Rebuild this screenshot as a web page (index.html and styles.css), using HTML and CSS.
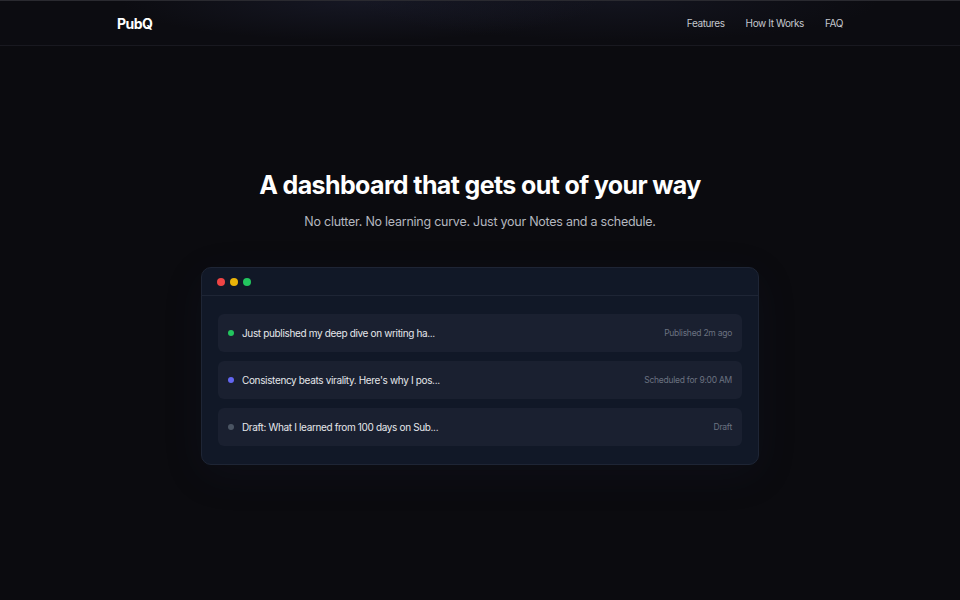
FILE: index.html
```html
<!DOCTYPE html>
<html lang="en">
<head>
    <meta charset="UTF-8">
    <meta name="viewport" content="width=device-width, initial-scale=1.0">
    <title>PubQ - Dashboard</title>
    <link rel="stylesheet" href="styles.css">
</head>
<body>
    <header class="site-header">
        <div class="header-inner">
            <a class="logo" href="#">PubQ</a>
            <nav class="nav">
                <a href="#">Features</a>
                <a href="#">How It Works</a>
                <a href="#">FAQ</a>
            </nav>
        </div>
    </header>

    <main class="hero">
        <h1>A dashboard that gets out of your way</h1>
        <p class="subtitle">No clutter. No learning curve. Just your Notes and a schedule.</p>

        <div class="window">
            <div class="window-bar">
                <span class="light red"></span>
                <span class="light yellow"></span>
                <span class="light green"></span>
            </div>
            <div class="window-body">
                <div class="note-row">
                    <span class="status published"></span>
                    <span class="note-title">Just published my deep dive on writing ha...</span>
                    <span class="note-meta">Published 2m ago</span>
                </div>
                <div class="note-row">
                    <span class="status scheduled"></span>
                    <span class="note-title">Consistency beats virality. Here's why I pos...</span>
                    <span class="note-meta">Scheduled for 9:00 AM</span>
                </div>
                <div class="note-row">
                    <span class="status draft"></span>
                    <span class="note-title">Draft: What I learned from 100 days on Sub...</span>
                    <span class="note-meta">Draft</span>
                </div>
            </div>
        </div>
    </main>
</body>
</html>
```

FILE: styles.css
```css
:root {
    --bg-color: #0b0b0f;
    --card-bg: #111827;
    --row-bg: #1a2030;
    --border: #1e2535;
    --text-color: #f3f4f6;
    --muted: #9ca3af;
}
* {
    box-sizing: border-box;
}
body {
    font-family: 'Inter', sans-serif;
    margin: 0;
    padding: 0;
    color: var(--text-color);
    background: var(--bg-color);
    min-height: 100vh;
}
a {
    color: inherit;
    text-decoration: none;
}
.site-header {
    height: 46px;
    border-top: 1px solid #2a2a30;
    border-bottom: 1px solid #191920;
    background: radial-gradient(ellipse 240px 40px at 360px 0, rgba(40, 44, 70, 0.35), transparent),
                radial-gradient(ellipse 260px 40px at 620px 0, rgba(40, 44, 70, 0.25), transparent),
                #0c0c11;
}
.header-inner {
    max-width: 726px;
    height: 100%;
    margin: 0 auto;
    display: flex;
    justify-content: space-between;
    align-items: center;
}
.logo {
    font-weight: 700;
    font-size: 14px;
    letter-spacing: -0.04em;
    color: #fff;
}
.nav {
    display: flex;
    gap: 21px;
}
.nav a {
    font-size: 10px;
    color: #c5c8ce;
    letter-spacing: -0.04em;
}
.hero {
    padding-top: 124px;
    text-align: center;
}
h1 {
    margin: 0;
    font-size: 25px;
    line-height: 30px;
    font-weight: 700;
    letter-spacing: -0.025em;
    color: #fff;
}
.subtitle {
    margin: 12px 0 0;
    font-size: 12.5px;
    line-height: 20px;
    letter-spacing: -0.02em;
    color: #b4b7bf;
}
.window {
    width: 558px;
    margin: 35px auto 0;
    background: var(--card-bg);
    border: 1px solid var(--border);
    border-radius: 10px;
    box-shadow: 0 10px 40px rgba(30, 40, 80, 0.12);
    text-align: left;
}
.window-bar {
    display: flex;
    gap: 5px;
    padding: 10px 15px 9px;
    border-bottom: 1px solid var(--border);
}
.light {
    width: 8px;
    height: 8px;
    border-radius: 50%;
}
.red { background: #ef4444; }
.yellow { background: #eab308; }
.green { background: #22c55e; }
.window-body {
    display: flex;
    flex-direction: column;
    gap: 9px;
    padding: 18px 16px;
}
.note-row {
    display: flex;
    align-items: center;
    gap: 8px;
    padding: 10px 10px;
    background: var(--row-bg);
    border-radius: 6px;
    line-height: 18px;
}
.status {
    width: 6px;
    height: 6px;
    border-radius: 50%;
    flex-shrink: 0;
}
.status.published { background: #22c55e; }
.status.scheduled { background: #6366f1; }
.status.draft { background: #4b5563; }
.note-title {
    flex: 1;
    font-size: 10px;
    color: #e5e7eb;
    letter-spacing: -0.035em;
}
.note-meta {
    font-size: 8.5px;
    color: #6b7280;
    letter-spacing: -0.03em;
}
```
